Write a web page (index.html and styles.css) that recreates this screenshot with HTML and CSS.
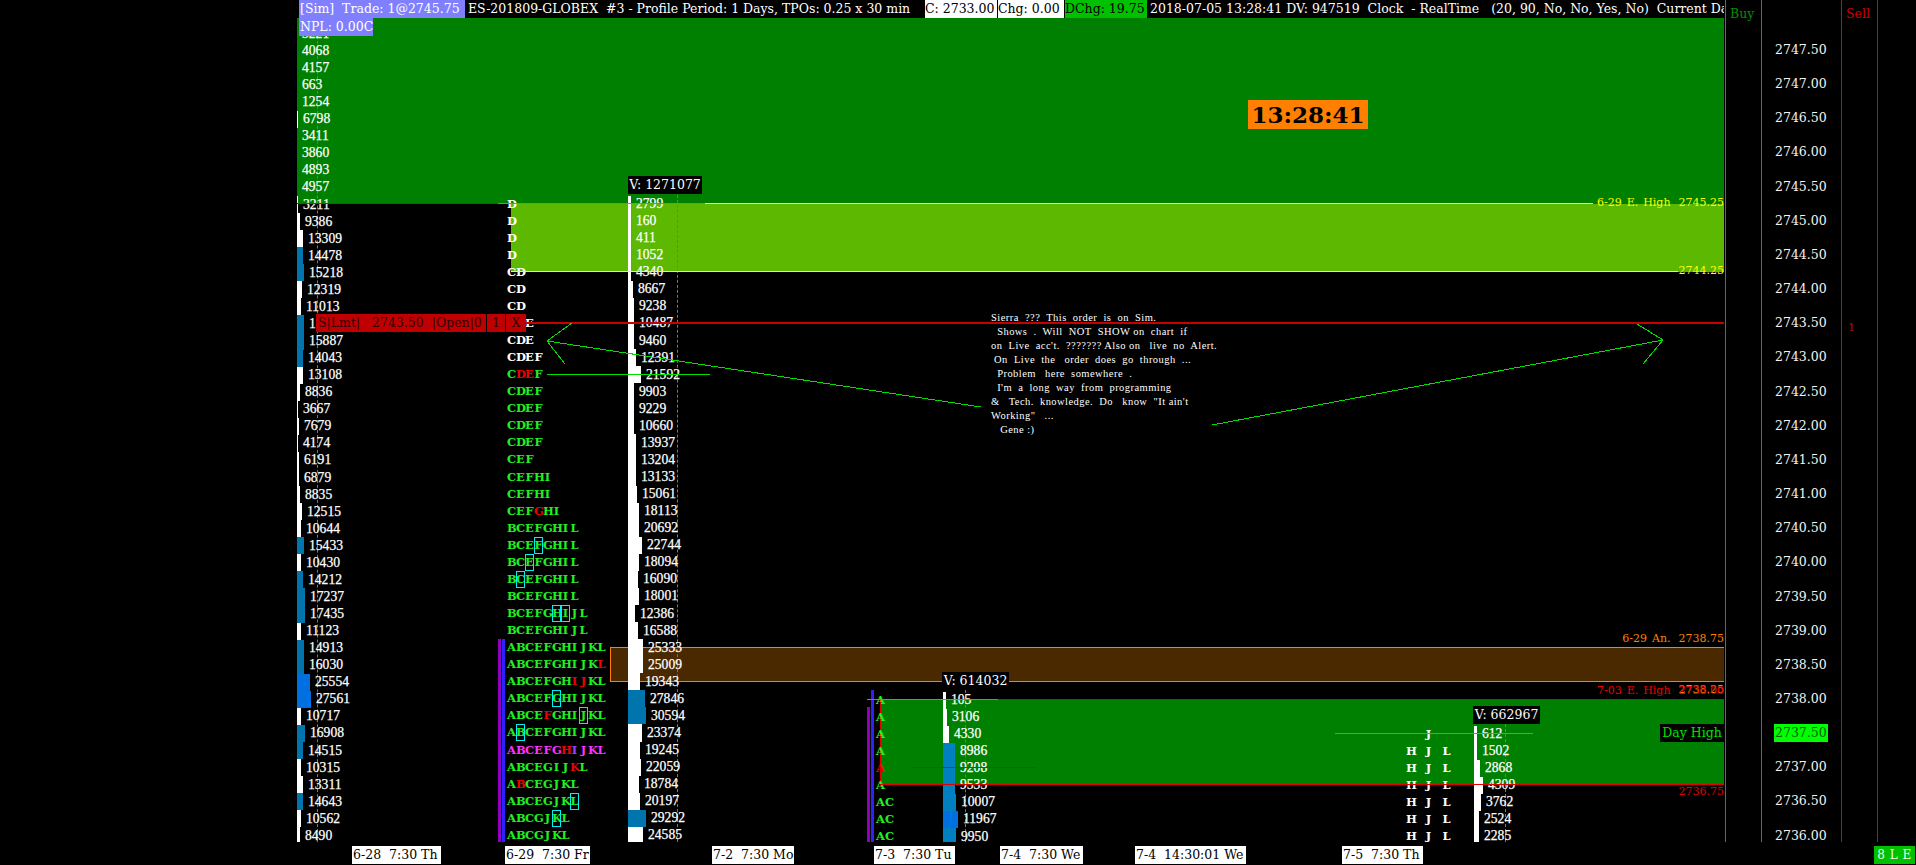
FILE: index.html
```html
<!DOCTYPE html>
<html lang="en">
<head>
<meta charset="utf-8">
<title>ES-201809-GLOBEX #3 - Profile Period</title>
<link rel="stylesheet" href="styles.css">
</head>
<body>
<div class="screen">
  <div class="main">
    <div class="gutter"></div>
    <div class="chart">
      <div class="band band-top"></div>
      <div class="band band-lime"></div>
      <div class="band band-orange"></div>
      <div class="band band-low"></div>
      <div class="edge"></div>

      <div class="clock">13:28:41</div>

      <div class="tag tag-yellow tag-clip"><span>2747.75</span></div>
      <div class="tag tag-yellow tag-ehigh"><span>6-29 E. High</span><span>2745.25</span></div>
      <div class="tag tag-yellow tag-elow"><span>2744.25</span></div>
      <div class="tag tag-orange tag-an"><span>6-29 An.</span><span>2738.75</span></div>
      <div class="tag tag-orange tag-an2"><span>2738.25</span></div>
      <div class="tag tag-red tag-e3"><span>7-03 E. High</span><span>2738.00</span></div>
      <div class="tag tag-red tag-l3"><span>2736.75</span></div>
      <div class="dayhigh">Day High</div>

      <div class="dash dash-1"></div>
      <div class="dash dash-3"></div>
      <div class="dash dash-4"></div>
      <div class="dash dash-5"></div>

      <div class="split split-a"><i class="pur"></i><i class="blu"></i></div>
      <div class="stick stick-pur"></div>
      <div class="stick stick-blu"></div>

      <div class="profile p1">
        <div class="r"><i></i><span>3221</span></div>
        <div class="r"><i></i><span>4068</span></div>
        <div class="r"><i></i><span>4157</span></div>
        <div class="r"><i></i><span>663</span></div>
        <div class="r"><i></i><span>1254</span></div>
        <div class="r"><i style="width:1px"></i><span>6798</span></div>
        <div class="r"><i></i><span>3411</span></div>
        <div class="r"><i></i><span>3860</span></div>
        <div class="r"><i></i><span>4893</span></div>
        <div class="r"><i></i><span>4957</span></div>
        <div class="r"><i style="width:1px"></i><span>3211</span></div>
        <div class="r"><i style="width:3px"></i><span>9386</span></div>
        <div class="r"><i style="width:6px"></i><span>13309</span></div>
        <div class="r"><i class="b" style="width:6px"></i><span>14478</span></div>
        <div class="r"><i class="b" style="width:7px"></i><span>15218</span></div>
        <div class="r"><i style="width:5px"></i><span>12319</span></div>
        <div class="r"><i style="width:4px"></i><span>11013</span></div>
        <div class="r"><i class="b" style="width:7px"></i><span>15001</span></div>
        <div class="r"><i class="b" style="width:7px"></i><span>15887</span></div>
        <div class="r"><i class="b" style="width:6px"></i><span>14043</span></div>
        <div class="r"><i style="width:6px"></i><span>13108</span></div>
        <div class="r"><i style="width:3px"></i><span>8836</span></div>
        <div class="r"><i style="width:1px"></i><span>3667</span></div>
        <div class="r"><i style="width:2px"></i><span>7679</span></div>
        <div class="r"><i style="width:1px"></i><span>4174</span></div>
        <div class="r"><i style="width:2px"></i><span>6191</span></div>
        <div class="r"><i style="width:2px"></i><span>6879</span></div>
        <div class="r"><i style="width:3px"></i><span>8835</span></div>
        <div class="r"><i style="width:5px"></i><span>12515</span></div>
        <div class="r"><i style="width:4px"></i><span>10644</span></div>
        <div class="r"><i class="b" style="width:7px"></i><span>15433</span></div>
        <div class="r"><i style="width:4px"></i><span>10430</span></div>
        <div class="r"><i class="b" style="width:6px"></i><span>14212</span></div>
        <div class="r"><i class="b" style="width:8px"></i><span>17237</span></div>
        <div class="r"><i class="b" style="width:8px"></i><span>17435</span></div>
        <div class="r"><i style="width:4px"></i><span>11123</span></div>
        <div class="r"><i class="b" style="width:7px"></i><span>14913</span></div>
        <div class="r"><i class="b" style="width:7px"></i><span>16030</span></div>
        <div class="r"><i class="c" style="width:13px"></i><span>25554</span></div>
        <div class="r"><i class="c" style="width:14px"></i><span>27561</span></div>
        <div class="r"><i style="width:4px"></i><span>10717</span></div>
        <div class="r"><i class="b" style="width:8px"></i><span>16908</span></div>
        <div class="r"><i class="b" style="width:6px"></i><span>14515</span></div>
        <div class="r"><i style="width:4px"></i><span>10315</span></div>
        <div class="r"><i style="width:6px"></i><span>13311</span></div>
        <div class="r"><i class="b" style="width:6px"></i><span>14643</span></div>
        <div class="r"><i style="width:4px"></i><span>10562</span></div>
        <div class="r"><i style="width:3px"></i><span>8490</span></div>
      </div>

      <div class="letters l2">
        <div class="w"><b>D</b></div>
        <div class="w"><b>D</b></div>
        <div class="w"><b>D</b></div>
        <div class="w"><b>D</b></div>
        <div class="w"><b>C</b><b>D</b></div>
        <div class="w"><b>C</b><b>D</b></div>
        <div class="w"><b>C</b><b>D</b></div>
        <div class="w"><b>C</b><b>D</b><b>E</b></div>
        <div class="w"><b>C</b><b>D</b><b>E</b></div>
        <div class="w"><b>C</b><b>D</b><b>E</b><b>F</b></div>
        <div><b>C</b><b class="x">D</b><b class="x">E</b><b>F</b></div>
        <div><b>C</b><b>D</b><b>E</b><b>F</b></div>
        <div><b>C</b><b>D</b><b>E</b><b>F</b></div>
        <div><b>C</b><b>D</b><b>E</b><b>F</b></div>
        <div><b>C</b><b>D</b><b>E</b><b>F</b></div>
        <div><b>C</b><b>E</b><b>F</b></div>
        <div><b>C</b><b>E</b><b>F</b><b>H</b><b>I</b></div>
        <div><b>C</b><b>E</b><b>F</b><b>H</b><b>I</b></div>
        <div><b>C</b><b>E</b><b>F</b><b class="x">G</b><b>H</b><b>I</b></div>
        <div><b>B</b><b>C</b><b>E</b><b>F</b><b>G</b><b>H</b><b>I</b><b>L</b></div>
        <div><b>B</b><b>C</b><b>E</b><b class="k">F</b><b>G</b><b>H</b><b>I</b><b>L</b></div>
        <div><b>B</b><b>C</b><b class="k">E</b><b>F</b><b>G</b><b>H</b><b>I</b><b>L</b></div>
        <div><b>B</b><b class="k">C</b><b>E</b><b>F</b><b>G</b><b>H</b><b>I</b><b>L</b></div>
        <div><b>B</b><b>C</b><b>E</b><b>F</b><b>G</b><b>H</b><b>I</b><b>L</b></div>
        <div><b>B</b><b>C</b><b>E</b><b>F</b><b>G</b><b class="k">H</b><b class="k">I</b><b>J</b><b>L</b></div>
        <div><b>B</b><b>C</b><b>E</b><b>F</b><b>G</b><b>H</b><b>I</b><b>J</b><b>L</b></div>
        <div><b>A</b><b>B</b><b>C</b><b>E</b><b>F</b><b>G</b><b>H</b><b>I</b><b>J</b><b>K</b><b>L</b></div>
        <div><b>A</b><b>B</b><b>C</b><b>E</b><b>F</b><b>G</b><b>H</b><b>I</b><b>J</b><b>K</b><b class="x">L</b></div>
        <div><b>A</b><b>B</b><b>C</b><b>E</b><b>F</b><b>G</b><b>H</b><b class="x">I</b><b class="x">J</b><b>K</b><b>L</b></div>
        <div><b>A</b><b>B</b><b>C</b><b>E</b><b>F</b><b class="k">G</b><b>H</b><b>I</b><b>J</b><b>K</b><b>L</b></div>
        <div><b>A</b><b>B</b><b>C</b><b>E</b><b class="x">F</b><b>G</b><b>H</b><b>I</b><b class="k">J</b><b>K</b><b>L</b></div>
        <div><b>A</b><b class="k">B</b><b>C</b><b>E</b><b>F</b><b>G</b><b>H</b><b>I</b><b>J</b><b>K</b><b>L</b></div>
        <div class="m"><b>A</b><b>B</b><b>C</b><b>E</b><b>F</b><b>G</b><b class="x">H</b><b class="v">I</b><b>J</b><b>K</b><b>L</b></div>
        <div><b>A</b><b>B</b><b>C</b><b>E</b><b>G</b><b>I</b><b>J</b><b class="x">K</b><b>L</b></div>
        <div><b>A</b><b class="x">B</b><b>C</b><b>E</b><b>G</b><b>J</b><b>K</b><b>L</b></div>
        <div><b>A</b><b>B</b><b>C</b><b>E</b><b>G</b><b>J</b><b>K</b><b class="k">L</b></div>
        <div><b>A</b><b>B</b><b>C</b><b>G</b><b>J</b><b class="k">K</b><b>L</b></div>
        <div><b>A</b><b>B</b><b>C</b><b>G</b><b>J</b><b>K</b><b>L</b></div>
      </div>

      <div class="profile p3">
        <div class="r"><i style="width:3px"></i><span>2799</span></div>
        <div class="r"><i style="width:3px"></i><span>160</span></div>
        <div class="r"><i style="width:3px"></i><span>411</span></div>
        <div class="r"><i style="width:3px"></i><span>1052</span></div>
        <div class="r"><i style="width:3px"></i><span>4340</span></div>
        <div class="r"><i style="width:5px"></i><span>8667</span></div>
        <div class="r"><i style="width:6px"></i><span>9238</span></div>
        <div class="r"><i style="width:6px"></i><span>10487</span></div>
        <div class="r"><i style="width:6px"></i><span>9460</span></div>
        <div class="r"><i style="width:8px"></i><span>12391</span></div>
        <div class="r"><i style="width:13px"></i><span>21592</span></div>
        <div class="r"><i style="width:6px"></i><span>9903</span></div>
        <div class="r"><i style="width:6px"></i><span>9229</span></div>
        <div class="r"><i style="width:6px"></i><span>10660</span></div>
        <div class="r"><i style="width:8px"></i><span>13937</span></div>
        <div class="r"><i style="width:8px"></i><span>13204</span></div>
        <div class="r"><i style="width:8px"></i><span>13133</span></div>
        <div class="r"><i style="width:9px"></i><span>15061</span></div>
        <div class="r"><i style="width:11px"></i><span>18113</span></div>
        <div class="r"><i style="width:11px"></i><span>20692</span></div>
        <div class="r"><i style="width:14px"></i><span>22744</span></div>
        <div class="r"><i style="width:11px"></i><span>18094</span></div>
        <div class="r"><i style="width:10px"></i><span>16090</span></div>
        <div class="r"><i style="width:11px"></i><span>18001</span></div>
        <div class="r"><i style="width:7px"></i><span>12386</span></div>
        <div class="r"><i style="width:10px"></i><span>16588</span></div>
        <div class="r"><i style="width:15px"></i><span>25333</span></div>
        <div class="r"><i style="width:15px"></i><span>25009</span></div>
        <div class="r"><i style="width:12px"></i><span>19343</span></div>
        <div class="r"><i class="b" style="width:17px"></i><span>27846</span></div>
        <div class="r"><i class="b" style="width:18px"></i><span>30594</span></div>
        <div class="r"><i style="width:14px"></i><span>23374</span></div>
        <div class="r"><i style="width:12px"></i><span>19245</span></div>
        <div class="r"><i style="width:13px"></i><span>22059</span></div>
        <div class="r"><i style="width:11px"></i><span>18784</span></div>
        <div class="r"><i style="width:12px"></i><span>20197</span></div>
        <div class="r"><i class="b" style="width:18px"></i><span>29292</span></div>
        <div class="r"><i style="width:15px"></i><span>24585</span></div>
      </div>

      <div class="letters l4">
        <div><b>A</b></div>
        <div><b>A</b></div>
        <div><b>A</b></div>
        <div><b>A</b></div>
        <div><b class="x">A</b></div>
        <div><b>A</b></div>
        <div><b>A</b><b>C</b></div>
        <div><b>A</b><b>C</b></div>
        <div><b>A</b><b>C</b></div>
      </div>

      <div class="profile p4">
        <div class="r"><i style="width:3px"></i><span>105</span></div>
        <div class="r"><i style="width:4px"></i><span>3106</span></div>
        <div class="r"><i style="width:6px"></i><span>4330</span></div>
        <div class="r"><i class="d" style="width:12px"></i><span>8986</span></div>
        <div class="r"><i class="d" style="width:12px"></i><span>9208</span></div>
        <div class="r"><i class="d" style="width:12px"></i><span>9533</span></div>
        <div class="r"><i class="d" style="width:13px"></i><span>10007</span></div>
        <div class="r"><i class="c" style="width:15px"></i><span>11967</span></div>
        <div class="r"><i class="d" style="width:13px"></i><span>9950</span></div>
      </div>

      <div class="letters l5">
        <div><b class="e"></b><b class="e"></b><b>J</b></div>
        <div><b>H</b><b class="e"></b><b>J</b><b class="e"></b><b>L</b></div>
        <div><b>H</b><b class="e"></b><b>J</b><b class="e"></b><b>L</b></div>
        <div><b>H</b><b class="e"></b><b>J</b><b class="e"></b><b>L</b></div>
        <div><b>H</b><b class="e"></b><b>J</b><b class="e"></b><b>L</b></div>
        <div><b>H</b><b class="e"></b><b>J</b><b class="e"></b><b>L</b></div>
        <div><b>H</b><b class="e"></b><b>J</b><b class="e"></b><b>L</b></div>
      </div>

      <div class="profile p5">
        <div class="r"><i style="width:3px"></i><span>612</span></div>
        <div class="r"><i style="width:3px"></i><span>1502</span></div>
        <div class="r"><i style="width:6px"></i><span>2868</span></div>
        <div class="r"><i style="width:9px"></i><span>4309</span></div>
        <div class="r"><i style="width:7px"></i><span>3762</span></div>
        <div class="r"><i style="width:5px"></i><span>2524</span></div>
        <div class="r"><i style="width:5px"></i><span>2285</span></div>
      </div>

      <svg class="lines" width="1428" height="842" viewBox="297 0 1428 842" aria-hidden="true">
        <g fill="none" stroke-width="1">
          <path stroke="#e00000" d="M297 203.5H498"/>
          <path stroke="#00e000" d="M498 203.5H705"/>
          <path stroke="#ffff00" d="M705 203.5H1593M511 271.5H1678"/>
          <path stroke="#c80000" stroke-width="2" d="M526 323H1724"/>
          <path stroke="#00e000" d="M547 374.5H710"/>
          <path stroke="#00e000" d="M572 323L547 341L565 364M547 341L981 407M1212 425L1663 340M1637 324L1663 340L1643 364"/>
          <path stroke="#00e000" d="M867 699.5H998M1335 733.5H1533"/>
          <path stroke="#e00000" d="M998 699.5H1724M880 784.5H1724M912 767.5H1037"/>
        </g>
      </svg>

      <pre class="note">Sierra  ???  This  order  is  on  Sim.
  Shows  .  Will  NOT  SHOW on  chart  if
on  Live  acc't.  ??????? Also on   live  no  Alert.
 On  Live  the   order  does  go  through  ...
  Problem   here  somewhere  .
  I'm  a  long  way  from  programming
&amp;   Tech.  knowledge.  Do   know  "It ain't
Working"   ...
   Gene :)</pre>

      <div class="vol v3">V: 1271077</div>
      <div class="vol v4">V: 614032</div>
      <div class="vol v5">V: 662967</div>

      <div class="order"><span class="o-main">S|Lmt|   2743.50  |Open|0</span><span class="o-one">1</span><span class="o-x">X</span></div>

      <div class="header">
        <span class="h-sim">[Sim]  Trade: 1@2745.75</span>
        <span class="h-title">ES-201809-GLOBEX  #3 - Profile Period: 1 Days, TPOs: 0.25 x 30 min</span>
        <span class="h-c">C: 2733.00</span>
        <span class="h-chg">Chg: 0.00</span>
        <span class="h-d">DChg: 19.75</span>
        <span class="h-rest">2018-07-05 13:28:41 DV: 947519  Clock  - RealTime   (20, 90, No, No, Yes, No)  Current Day</span>
      </div>
      <div class="npl">NPL: 0.00C</div>
    </div>

    <div class="side side-buy">Buy</div>
    <div class="scale">
      <div>2747.50</div><div>2747.00</div><div>2746.50</div><div>2746.00</div>
      <div>2745.50</div><div>2745.00</div><div>2744.50</div><div>2744.00</div>
      <div>2743.50</div><div>2743.00</div><div>2742.50</div><div>2742.00</div>
      <div>2741.50</div><div>2741.00</div><div>2740.50</div><div>2740.00</div>
      <div>2739.50</div><div>2739.00</div><div>2738.50</div><div>2738.00</div>
      <div class="now"><span>2737.50</span></div><div>2737.00</div><div>2736.50</div><div>2736.00</div>
    </div>
    <div class="side side-sell"><span>Sell</span><span class="qty">1</span></div>
  </div>

  <div class="footer">
    <span class="t t1">6-28  7:30 Th</span>
    <span class="t t2">6-29  7:30 Fr</span>
    <span class="t t3">7-2  7:30 Mo</span>
    <span class="t t4">7-3  7:30 Tu</span>
    <span class="t t5">7-4  7:30 We</span>
    <span class="t t6">7-4  14:30:01 We</span>
    <span class="t t7">7-5  7:30 Th</span>
    <span class="sle">8 L E</span>
  </div>
</div>
</body>
</html>
```

FILE: styles.css
```css
* { box-sizing: border-box; }
html, body { margin: 0; padding: 0; background: #000; }
body { width: 1916px; height: 865px; overflow: hidden; font-family: "DejaVu Serif", serif; color: #fff; }

.screen { display: flex; flex-direction: column; height: 865px; }
.main { display: flex; height: 842px; }
.gutter { width: 297px; flex: none; }
.chart { position: relative; width: 1428px; flex: none; height: 842px; overflow: hidden; background: #000; }

/* bands */
.band { position: absolute; }
.band-top { left: 0; top: 18px; width: 1427px; height: 186px; background: #008000; }
.band-lime { left: 214px; top: 204px; width: 1213px; height: 68px; background: #5cb800; }
.band-orange { left: 313px; top: 647px; width: 1114px; height: 35px; background: #4a2800; border: 1px solid #ff8000; border-right: 0; }
.band-low { left: 583px; top: 699px; width: 844px; height: 86px; background: #008000; }
.edge { position: absolute; left: 583px; top: 699px; width: 1px; height: 86px; background: #e00000; }

.clock { position: absolute; left: 951px; top: 100px; width: 120px; height: 29px; background: #ff8000; color: #000; font-size: 23px; font-weight: 700; line-height: 29px; text-align: center; white-space: nowrap; }

/* right-hand level tags */
.tag { position: absolute; right: 1px; height: 18px; display: flex; gap: 8px; font-size: 11px; line-height: 18px; white-space: pre; word-spacing: 1.5px; }
.tag-yellow { color: #ffff00; }
.tag-orange { color: #ff8000; }
.tag-red { color: #f00000; }
.tag-clip { top: 5px; }
.tag-ehigh { top: 194px; }
.tag-elow { top: 262px; }
.tag-an { top: 630px; }
.tag-an2 { top: 681px; }
.tag-e3 { top: 682px; }
.tag-l3 { top: 783px; color: #e00000; }
.dayhigh { position: absolute; left: 1363px; top: 724px; width: 64px; height: 18px; background: #000; color: #00e000; font-size: 12.5px; line-height: 18px; text-align: center; white-space: nowrap; }

/* dashed guides */
.dash { position: absolute; width: 0; border-left: 1px dashed #777; }
.dash-1 { left: 20px; top: 36px; bottom: 0; }
.dash-3 { left: 380px; top: 195px; bottom: 0; }
.dash-4 { left: 668px; top: 690px; bottom: 0; }
.dash-5 { left: 1208px; top: 724px; bottom: 0; }

/* value area sticks */
.split { position: absolute; left: 201px; top: 639px; bottom: 0; display: flex; gap: 1px; }
.split i { display: block; width: 3px; }
.pur { background: #9000c0; }
.blu { background: #3020ff; }
.stick { position: absolute; width: 3px; bottom: 0; }
.stick-pur { left: 570px; top: 707px; background: #9000c0; }
.stick-blu { left: 574px; top: 690px; background: #3020ff; }

/* volume profiles */
.profile { position: absolute; font-family: "Liberation Serif", serif; font-size: 13.6px; color: #fff; -webkit-text-stroke: 0.25px #fff; }
.p1 { left: 0; top: 25.4px; }
.p3 { left: 331px; top: 195.5px; }
.p4 { left: 646px; top: 691.5px; }
.p5 { left: 1177px; top: 725.5px; }
.r { display: flex; align-items: center; height: 17.07px; white-space: nowrap; }
.r i { display: block; width: 0; height: 100%; background: #fff; flex: none; }
.r i.b { background: #0075ad; }
.r i.c { background: #0070e0; }
.r i.d { background: #0080c0; }
.r span { margin-left: 5px; }

/* TPO letters */
.letters { position: absolute; font-size: 11.5px; font-weight: 700; color: #20f020; }
.l2 { left: 210px; top: 195.5px; }
.l4 { left: 579px; top: 691.5px; }
.l5 { left: 1109px; top: 725.5px; color: #fff; }
.letters > div { display: flex; height: 17.07px; align-items: center; }
.letters b { display: block; width: 9px; height: 17px; line-height: 17px; text-align: center; flex: none; font-weight: 700; }
.letters .w { color: #fff; }
.letters .x { color: #f00000; }
.letters .k { outline: 1px solid #00f0f0; outline-offset: -1px; }
.letters .m { color: #ff30ff; }
.letters .v { color: #a040ff; }

.lines { position: absolute; left: 0; top: 0; shape-rendering: crispEdges; pointer-events: none; }

.note { position: absolute; left: 694px; top: 311px; margin: 0; font-family: "Liberation Serif", serif; font-size: 10.5px; letter-spacing: 0.45px; line-height: 14px; color: #fff; white-space: pre; }

.vol { position: absolute; height: 18px; width: 74px; background: #000; font-family: "DejaVu Serif", serif; font-size: 12.5px; line-height: 18px; text-align: center; white-space: nowrap; }
.v3 { left: 331px; top: 176px; }
.v4 { left: 645px; top: 672px; width: 67px; }
.v5 { left: 1176px; top: 706px; width: 67px; }

.order { position: absolute; left: 19px; top: 314px; width: 210px; height: 18px; display: flex; background: #c00000; color: #300000; font-size: 12.5px; line-height: 18px; white-space: pre; overflow: hidden; }
.o-main { width: 171px; padding-left: 2px; border-right: 1px solid #000; overflow: hidden; }
.o-one { width: 19px; text-align: center; border-right: 1px solid #000; }
.o-x { flex: 1; text-align: center; }

/* header */
.header { position: absolute; left: 0; top: 0; width: 1427px; height: 18px; display: flex; background: #000; font-size: 12.5px; line-height: 18px; white-space: pre; overflow: hidden; }
.header span { flex: none; }
.h-sim { margin-left: 2px; width: 166px; padding-left: 1px; background: #8080ff; }
.h-title { margin-left: 3px; width: 457px; }
.h-c, .h-chg { background: #fff; color: #000; }
.h-c { width: 72px; }
.h-chg { margin-left: 1px; width: 66px; }
.h-d { margin-left: 1px; width: 82px; background: #00c000; color: #000; }
.h-rest { margin-left: 3px; }
.npl { position: absolute; left: 2px; top: 18px; width: 74px; height: 18px; background: #8080ff; font-size: 12.5px; line-height: 18px; padding-left: 1px; white-space: nowrap; }

/* right columns */
.side { width: 37px; flex: none; border-left: 1px solid #00b000; border-right: 1px solid #00b000; padding: 5px 0 0 4px; font-size: 12.5px; line-height: 18px; color: #009000; }
.side-sell { display: flex; flex-direction: column; border-color: #e00000; color: #d00000; }
.qty { margin-top: 296px; padding-left: 2px; font-size: 11px; }
.scale { width: 79px; flex: none; padding: 33px 0 0 13px; font-size: 12.5px; color: #f4f4f4; }
.scale > div { height: 34.17px; line-height: 34px; }
.now span { display: inline-block; height: 18px; line-height: 18px; margin-left: -1px; padding: 0 1px; background: #00ff00; color: #006000; }

/* time axis */
.footer { display: flex; align-items: flex-start; margin-top: 4px; height: 18px; }
.t { height: 18px; background: #fff; color: #000; font-size: 12.5px; line-height: 18px; padding-left: 1px; white-space: pre; overflow: hidden; flex: none; }
.t1 { margin-left: 352px; width: 89px; }
.t2 { margin-left: 64px; width: 85px; }
.t3 { margin-left: 122px; width: 82px; }
.t4 { margin-left: 80px; width: 81px; }
.t5 { margin-left: 45px; width: 83px; }
.t6 { margin-left: 52px; width: 111px; }
.t7 { margin-left: 96px; width: 81px; }
.sle { margin-left: 451px; width: 41px; height: 18px; background: #00c000; color: #e8ffe8; font-size: 12px; line-height: 18px; text-align: center; letter-spacing: 0.5px; white-space: pre; flex: none; }
```
